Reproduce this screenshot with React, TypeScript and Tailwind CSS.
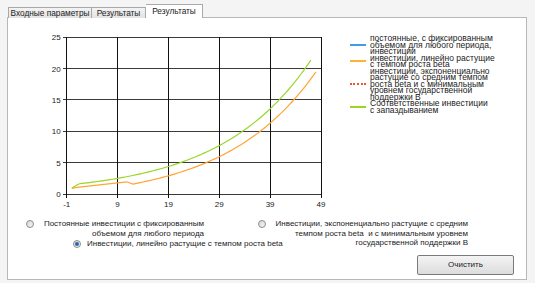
import React from "react";

// plot geometry (svg coords, svg sits at page x 8, y 18)
const X = (v: number) => 58.7 + (v + 1) * 5.086;
const Y = (v: number) => 176 - v * 6.268;

function path(pts: [number, number][]) {
  return pts.map(([x, y], i) => `${i ? "L" : "M"}${X(x).toFixed(2)},${Y(y).toFixed(2)}`).join(" ");
}

const greenPts: [number, number][] = [[0, 0.9], [1, 1.45]];
for (let x = 1.5; x <= 47; x += 0.5) greenPts.push([x, 1.5 * Math.exp(0.0565 * x)]);

const orangePts: [number, number][] = [[0, 0.9], [1, 1.05], [10.8, 1.95], [12, 1.59]];
for (let x = 12.5; x <= 48; x += 0.5) orangePts.push([x, -1.14 + 1.39 * Math.exp(0.0562 * x)]);

const xTicks = [-1, 9, 19, 29, 39, 49];
const yTicks = [0, 5, 10, 15, 20, 25];

function Chart() {
  return (
    <svg width="340" height="198" className="shrink-0 font-['Liberation_Sans',Arial,sans-serif]">
      {yTicks.map((v) => (
        <g key={"y" + v}>
          <line x1={X(-1) - 4} x2={X(49)} y1={Y(v)} y2={Y(v)} stroke="#3a3a3a" strokeWidth="1" shapeRendering="crispEdges" />
          <text x={X(-1) - 6} y={Y(v) + 3} fontSize="8" textAnchor="end" fill="#1b1b1b">{v}</text>
        </g>
      ))}
      {xTicks.map((v) => (
        <g key={"x" + v}>
          <line x1={X(v)} x2={X(v)} y1={Y(25)} y2={Y(0) + 4} stroke="#111" strokeWidth="1" shapeRendering="crispEdges" />
          <text x={X(v)} y={Y(0) + 13} fontSize="8" textAnchor="middle" fill="#1b1b1b">{v}</text>
        </g>
      ))}
      <path d={path(orangePts)} fill="none" stroke="#ffa532" strokeWidth="1.2" />
      <path d={path(greenPts)} fill="none" stroke="#9ad62a" strokeWidth="1.2" />
    </svg>
  );
}

const legend = [
  { color: "border-[#3d9cf0] border-solid", lines: ["постоянные, с фиксированным", "объемом для любого периода,", "инвестиции"] },
  { color: "border-[#ffb13a] border-solid", lines: ["инвестиции, линейно растущие", "с темпом роста beta"] },
  {
    color: "border-[#f0572a] border-dotted",
    lines: ["инвестиции, экспоненциально", "растущие со средним темпом", "роста beta и с минимальным", "уровнем государственной", "поддержки B"],
  },
  { color: "border-[#9ad62a] border-solid", lines: ["Соответственные инвестиции", "с запаздыванием"] },
];

function Radio({ checked }: { checked?: boolean }) {
  return (
    <span className="mt-[1px] flex h-[8px] w-[8px] shrink-0 items-center justify-center rounded-full border border-[#8c8c8c] bg-gradient-to-br from-[#d8d8d8] to-[#f6f6f6]">
      {checked && <span className="h-[4px] w-[4px] rounded-full bg-[#2a67b0]" />}
    </span>
  );
}

export default function App() {
  return (
    <div className="h-[283px] w-[535px] overflow-hidden bg-[#f4f4f4] font-['Liberation_Sans',Arial,sans-serif] text-[8px] text-[#1b1b1b]">
      <div className="flex h-[18px] items-end whitespace-nowrap pl-[8px] text-[8.3px]">
        <div className="flex h-[11px] w-[84px] items-center justify-center border border-b-0 border-[#a9a9a9] bg-gradient-to-b from-[#f3f3f3] to-[#e3e3e3] leading-none">
          Входные параметры
        </div>
        <div className="flex h-[11px] w-[54px] items-center justify-center border border-b-0 border-l-0 border-[#a9a9a9] bg-gradient-to-b from-[#f3f3f3] to-[#e3e3e3] leading-none">
          Результаты
        </div>
        <div className="relative z-10 flex h-[14px] w-[57px] items-start justify-center border border-b-0 border-l-0 border-[#a9a9a9] bg-white pt-[2px] leading-none">
          Результаты
        </div>
      </div>
      <div className="-mt-[1px] ml-[7px] flex h-[263px] w-[520px] flex-col border border-[#b8b8b8] bg-white">
        <div className="flex h-[198px]">
          <Chart />
          <div className="ml-[2px] flex flex-col pt-[17px] text-[8.5px] leading-[6.55px]">
            {legend.map((item, i) => (
              <div key={i} className="flex items-center">
                <span className={"w-[16px] border-t-2 " + item.color} />
                <div className="ml-[4px]">
                  {item.lines.map((l) => (
                    <div key={l} className="whitespace-nowrap">{l}</div>
                  ))}
                </div>
              </div>
            ))}
          </div>
        </div>
        <div className="flex pt-[3px] leading-[9.5px]">
          <div className="flex w-[250px] flex-col">
            <div className="flex items-start gap-[6px] pl-[18px]">
              <Radio />
              <div className="w-[164px] text-right">
                <div className="whitespace-nowrap">Постоянные инвестиции с фиксированным</div>
                <div className="whitespace-nowrap">объемом для любого периода</div>
              </div>
            </div>
            <div className="mt-[1px] flex items-start gap-[6px] pl-[65px]">
              <Radio checked />
              <div className="whitespace-nowrap">Инвестиции, линейно растущие с темпом роста beta</div>
            </div>
          </div>
          <div className="flex flex-1 flex-col">
            <div className="flex items-start gap-[6px]">
              <Radio />
              <div className="w-[196px] text-right">
                <div className="whitespace-nowrap">Инвестиции, экспоненциально растущие с средним</div>
                <div className="whitespace-pre">темпом роста beta  и с минимальным уровнем</div>
                <div className="whitespace-nowrap">государственной поддержки B</div>
              </div>
            </div>
            <button className="mr-[12px] mt-[7px] flex h-[20px] w-[97px] items-center justify-center self-end rounded-[2px] border border-[#7a7a7a] bg-gradient-to-b from-[#f4f4f4] to-[#dcdcdc] text-[8px] text-[#1b1b1b]">
              Очистить
            </button>
          </div>
        </div>
      </div>
    </div>
  );
}
